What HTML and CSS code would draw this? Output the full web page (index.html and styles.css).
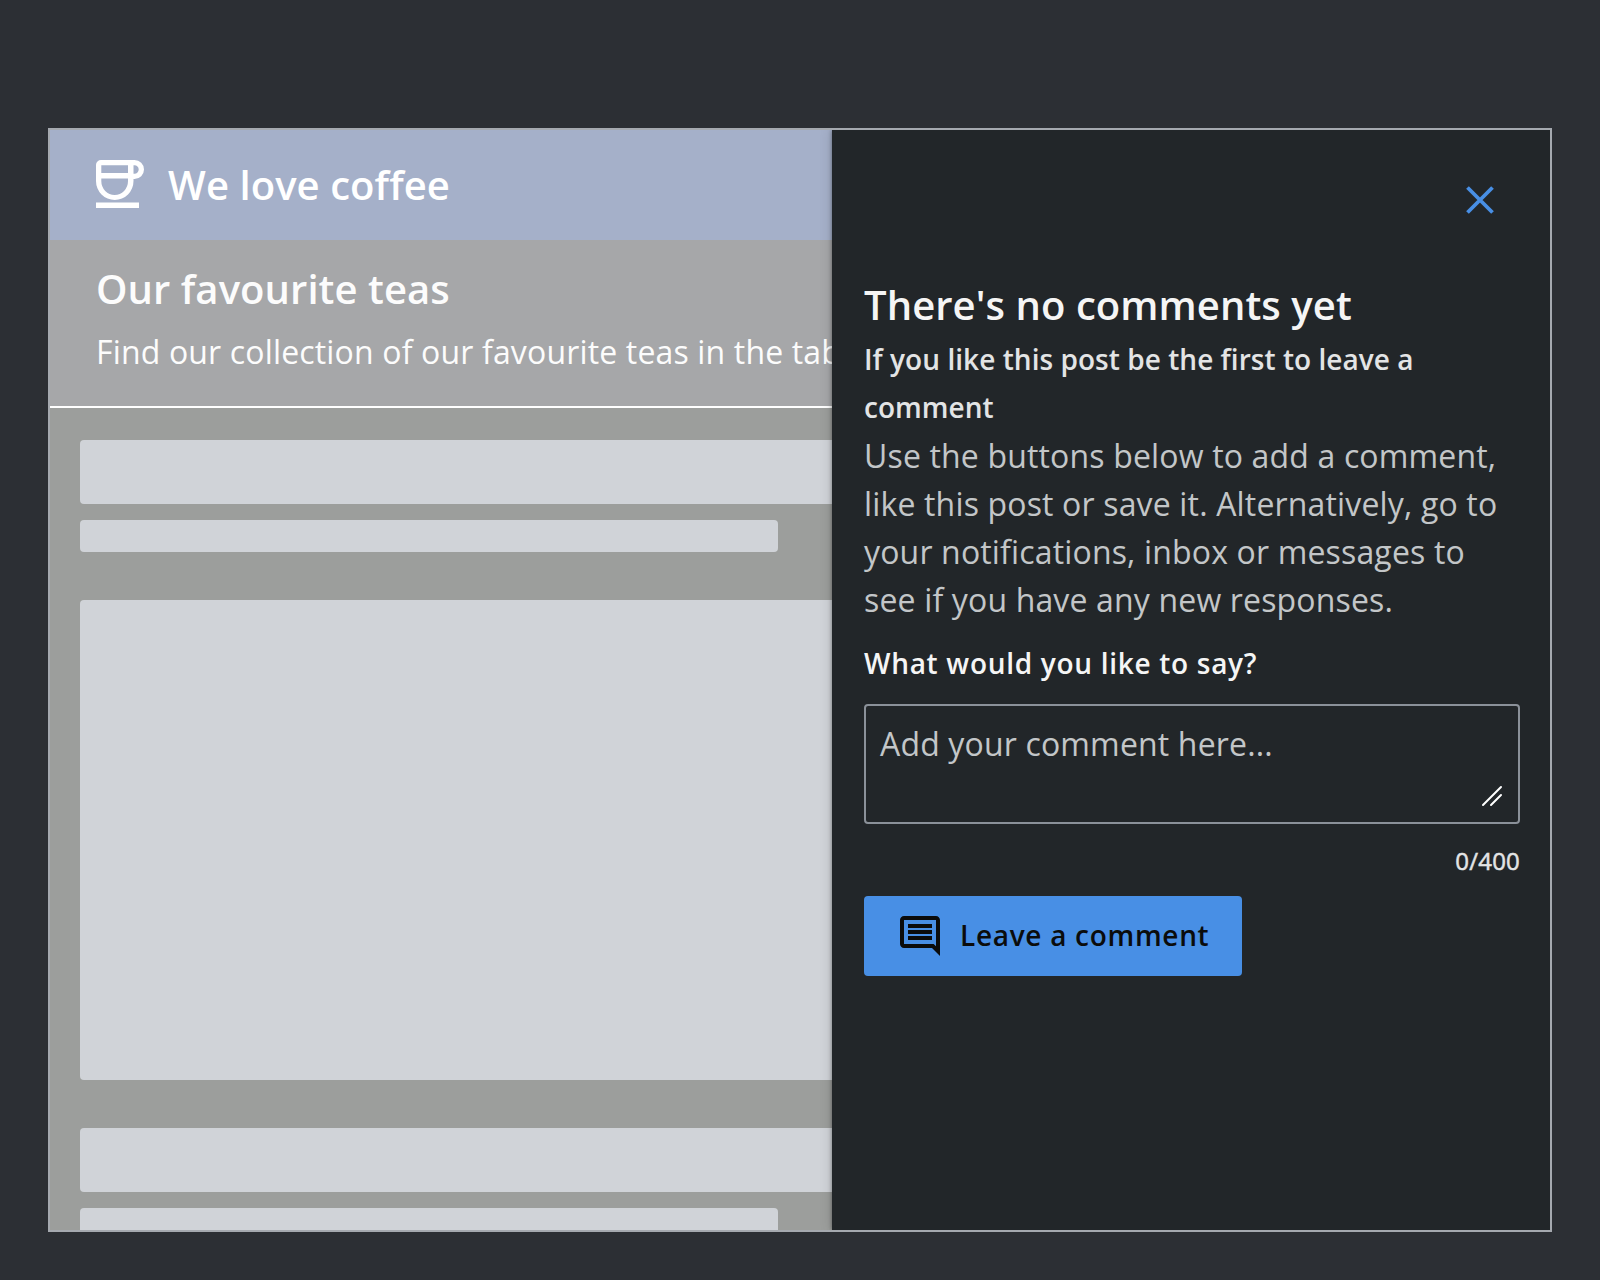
FILE: index.html
```html
<!DOCTYPE html>
<html lang="en">
<head>
<meta charset="utf-8">
<title>We love coffee</title>
<link rel="stylesheet" href="styles.css">
</head>
<body>
<div class="frame">
  <main class="page">
    <header class="top-bar">
      <svg class="cup" viewBox="0 0 48 48" aria-hidden="true">
        <path fill="currentColor" fill-rule="evenodd" d="M5 0H38.5A9.5 9.5 0 0 1 38.5 19H37.5V21A18.75 19 0 0 1 0 21V5A5 5 0 0 1 5 0ZM5.3 5.3V13H32V5.3ZM37.5 5.3V13.7H38.5A4.2 4.2 0 0 0 38.5 5.3ZM5.3 18.5V21A13.35 14 0 0 0 32 21V18.5ZM0 42.5H43V48H0Z"/>
      </svg>
      <h1 class="app-title">We love coffee</h1>
    </header>
    <section class="page-header">
      <h2 class="page-title">Our favourite teas</h2>
      <p class="page-text">Find our collection of our favourite teas in the table</p>
    </section>
    <div class="skeletons">
      <div class="bone bone-title"></div>
      <div class="bone bone-line"></div>
      <div class="bone bone-block"></div>
      <div class="bone bone-title"></div>
      <div class="bone bone-line"></div>
    </div>
  </main>
  <aside class="drawer">
    <button class="close" aria-label="Close">
      <svg width="28" height="28" viewBox="0 0 28 28"><path d="M1.500 1.500 26.500 26.500M26.500 1.500 1.500 26.500" stroke="currentColor" stroke-width="3.8"/></svg>
    </button>
    <h2 class="drawer-title">There's no comments yet</h2>
    <h3 class="subtitle">If you like this post be the first to leave a comment</h3>
    <p class="body">Use the buttons below to add a comment, like this post or save it. Alternatively, go to your notifications, inbox or messages to see if you have any new responses.</p>
    <div class="label">What would you like to say?</div>
    <div class="field">
      <span class="placeholder">Add your comment here...</span>
      <svg class="grip" width="20" height="20" viewBox="0 0 20 20"><path d="M1 19 19 1M9 19 19 9" stroke="currentColor" stroke-width="2" stroke-linecap="round"/></svg>
    </div>
    <div class="count">0/400</div>
    <button class="submit">
      <svg width="40" height="40" viewBox="2 2 20 20"><path fill="currentColor" d="M21.99 4c0-1.100-.89-2-1.990-2H4c-1.100 0-2 .9-2 2v12c0 1.100.9 2 2 2h14l4 4-.010-18zM20 4v13.170L18.830 16H4V4h16zM6 12h12v2H6zm0-3h12v2H6zm0-3h12v2H6z"/></svg>
      <span class="submit-text">Leave a comment</span>
    </button>
  </aside>
</div>
</body>
</html>
```
FILE: styles.css
```css
* { box-sizing: border-box; }
body {
  margin: 0;
  height: 1280px;
  overflow: hidden;
  background: #2c2f34;
  padding: 128px 48px 48px;
  font-family: "Open Sans", "Noto Sans", sans-serif;
}
h1, h2, h3, p { margin: 0; }
button { border: 0; font: inherit; cursor: pointer; }
svg { display: block; fill: none; overflow: visible; }
.frame {
  height: 1104px;
  border: 2px solid #a5a9af;
  display: grid;
  grid-template-columns: 782px 718px;
  overflow: hidden;
}
.page {
  min-width: 0;
  overflow: hidden;
  background: #9c9e9c;
  color: #fcfcfc;
}
.top-bar {
  height: 110px;
  padding-left: 46px;
  display: flex;
  align-items: center;
  gap: 24px;
  background: #a5b0c9;
  color: #fff;
}
.cup { width: 48px; height: 48px; margin-bottom: 2px; }
.app-title, .page-title, .drawer-title {
  font-size: 40px;
  line-height: 48px;
  font-weight: 600;
  letter-spacing: .07px;
}
.page-header {
  height: 168px;
  padding: 25px 0 0 46px;
  background: #a6a7a9;
  border-bottom: 2px solid #fff;
}
.page-text {
  margin-top: 15px;
  font-size: 32px;
  line-height: 48px;
  letter-spacing: .005em;
  white-space: nowrap;
}
.skeletons {
  padding: 32px 0 0 30px;
  display: flex;
  flex-direction: column;
}
.bone { width: 800px; flex: none; border-radius: 4px; background: #d0d3d8; }
.bone-title { height: 64px; margin-bottom: 16px; }
.bone-line { width: 698px; height: 32px; margin-bottom: 48px; }
.bone-block { height: 480px; margin-bottom: 48px; }
.drawer {
  position: relative;
  padding: 38px 30px 0 32px;
  background: #222629;
  box-shadow: 0 0 12px rgba(0, 0, 0, .15), 0 0 4px rgba(0, 0, 0, .4);
  display: flex;
  flex-direction: column;
  color: #f5f5f5;
}
.close {
  width: 64px;
  height: 64px;
  padding: 0;
  margin: 0 8px 49px 0;
  align-self: flex-end;
  display: grid;
  place-items: center;
  background: none;
  color: #488fe5;
}
.drawer-title { margin-bottom: 6px; }
.subtitle, .label {
  font-size: 28px;
  line-height: 48px;
  font-weight: 600;
}
.subtitle { margin-bottom: 1px; letter-spacing: .045px; color: #e3e4e5; }
.body, .placeholder {
  font-size: 32px;
  line-height: 48px;
  letter-spacing: .005em;
  color: #c3c6c8;
}
.label { margin: 15px 0 17px; letter-spacing: .025em; }
.field {
  height: 120px;
  padding: 14px;
  border: 2px solid #8b9199;
  border-radius: 4px;
  display: flex;
  justify-content: space-between;
  align-items: flex-end;
}
.placeholder { align-self: flex-start; }
.grip { color: #fff; margin: 0 2px 2px 0; }
.count {
  margin: 16px 0 8px;
  height: 48px;
  font-size: 24px;
  line-height: 42px;
  letter-spacing: .2px;
  -webkit-text-stroke: .5px currentColor;
  text-align: right;
  color: #e3e4e5;
}
.submit {
  width: 378px;
  height: 80px;
  padding: 0 0 0 36px;
  display: flex;
  align-items: center;
  gap: 20px;
  border-radius: 4px;
  background: #488fe5;
  color: #0b0c0c;
  font-size: 28px;
  font-weight: 600;
  letter-spacing: .025em;
}
.submit-text { margin-bottom: 2px; }
```
